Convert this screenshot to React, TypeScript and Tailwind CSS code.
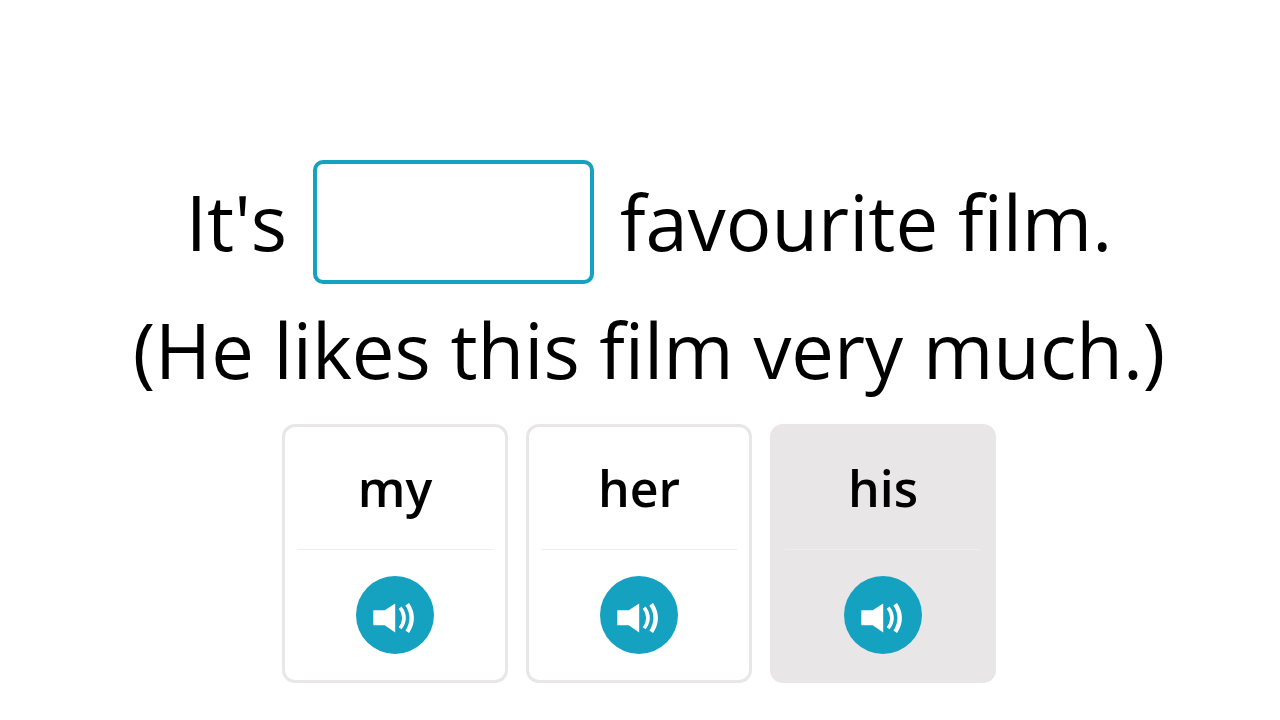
import { useState } from 'react'

interface Option {
  id: string
  word: string
}

const OPTIONS: Option[] = [
  { id: 'my', word: 'my' },
  { id: 'her', word: 'her' },
  { id: 'his', word: 'his' },
]

function SpeakerIcon() {
  return (
    <svg viewBox="0 0 78 78" className="h-full w-full" aria-hidden="true">
      <path d="M17.3 34.2H28.7L39.2 27.6V56.4L28.7 49.2H17.3Z" fill="#fff" />
      <g fill="none" stroke="#fff">
        <path d="M44.2 31.6Q51.8 41.8 44.2 52.2" strokeWidth="3.6" />
        <path d="M51.2 28.2Q60.2 42 51.2 55.8" strokeWidth="4.4" />
      </g>
    </svg>
  )
}

interface AnswerCardProps {
  option: Option
  selected: boolean
  onSelect: (id: string) => void
}

function AnswerCard({ option, selected, onSelect }: AnswerCardProps) {
  return (
    <li
      className={`flex w-[226px] flex-col rounded-[13px] border-3 border-[#e8e6e7] px-3 ${
        selected ? 'bg-[#e8e6e7]' : 'bg-white'
      }`}
    >
      <button
        type="button"
        aria-pressed={selected}
        onClick={() => onSelect(option.id)}
        className="h-[123px] cursor-pointer border-b border-[#eeeeee] text-[50px] leading-[60px] font-semibold"
      >
        {option.word}
      </button>
      <div className="flex justify-center py-[26px]">
        <button
          type="button"
          aria-label={`Listen to ${option.word}`}
          className="size-[78px] cursor-pointer rounded-full bg-[#15a1c0]"
        >
          <SpeakerIcon />
        </button>
      </div>
    </li>
  )
}

export default function App() {
  const [selectedId, setSelectedId] = useState('his')

  return (
    <main className="flex min-h-screen flex-col items-center bg-white px-4 pt-40 pb-9 font-['Open_Sans',sans-serif] text-black">
      {/* Sentence with the gap */}
      <div className="flex flex-col items-center gap-1 pl-[18px] text-[76px] leading-[124px] whitespace-nowrap">
        <div className="flex items-center gap-[26px]">
          <span>It's</span>
          <input
            type="text"
            readOnly
            aria-label="Missing word"
            className="h-[124px] w-[281px] rounded-[10px] border-4 border-[#15a1c0] bg-white outline-none"
          />
          <span>favourite film.</span>
        </div>
        <p>(He likes this film very much.)</p>
      </div>

      {/* Answer cards */}
      <ul className="mt-3 flex gap-[18px] pr-0.5">
        {OPTIONS.map((option) => (
          <AnswerCard
            key={option.id}
            option={option}
            selected={option.id === selectedId}
            onSelect={setSelectedId}
          />
        ))}
      </ul>
    </main>
  )
}
